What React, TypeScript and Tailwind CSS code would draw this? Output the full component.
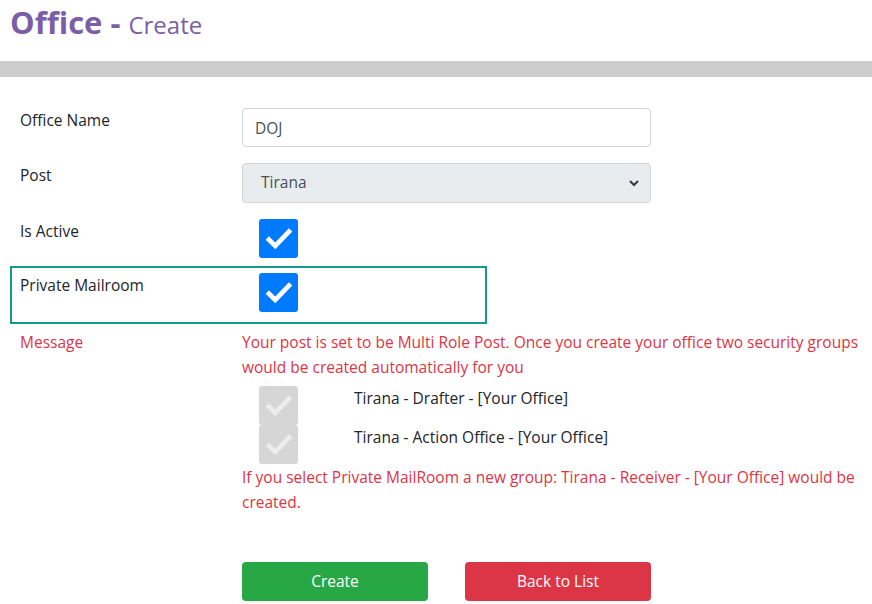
const font = { fontFamily: '"Open Sans", "Noto Sans", sans-serif' };

function CheckBox({ disabled = false }: { disabled?: boolean }) {
  return (
    <div
      className={
        "flex h-[39px] w-[39px] items-center justify-center rounded-[3px] " +
        (disabled ? "bg-[#d6d6d6]" : "bg-[#007bff]")
      }
    >
      <svg width="30" height="30" viewBox="0 0 24 24" fill="none">
        <path
          d="M4 12.5l5 5L20 6"
          stroke={disabled ? "#ececec" : "#ffffff"}
          strokeWidth="3.8"
          strokeLinecap="square"
        />
      </svg>
    </div>
  );
}

export default function App() {
  return (
    <div className="min-h-[604px] w-[872px] bg-white text-[15.5px] text-[#212529]" style={font}>
      <h1 className="flex items-baseline px-[10px] pt-[2px] text-[#7b5ea7]">
        <span className="text-[31px] font-bold leading-[40px]">Office -</span>
        <span className="ml-[8px] text-[24px] leading-[40px]">Create</span>
      </h1>

      <div className="mt-[16px] h-[16px] bg-[#cccccc]" />

      <div className="mt-[31px] grid grid-cols-[222px_1fr] pl-[20px] pr-[10px]">
        <label className="pt-[1px]">Office Name</label>
        <div>
          <input
            readOnly
            value="DOJ"
            className="h-[39px] w-[409px] rounded-[4px] border border-[#ced4da] px-[12px] text-[15.5px] text-[#495057] outline-none"
            style={font}
          />
        </div>

        <label className="mt-[16px] pt-[1px]">Post</label>
        <div className="mt-[16px]">
          <div className="flex h-[40px] w-[409px] items-center justify-between rounded-[4px] border border-[#ced4da] bg-[#e9ecef] pl-[18px] pr-[10px] text-[#495057]">
            <span>Tirana</span>
            <svg width="12" height="12" viewBox="0 0 12 12">
              <path d="M2 4l4 4 4-4" stroke="#343a40" strokeWidth="2" fill="none" />
            </svg>
          </div>
        </div>

        <label className="mt-[16px] pt-[1px]">Is Active</label>
        <div className="mt-[16px] pl-[17px]">
          <CheckBox />
        </div>
      </div>

      <div className="ml-[10px] mt-[8px] grid h-[58px] w-[477px] grid-cols-[222px_1fr] border-2 border-[#149a88] pl-[8px] pt-[5px]">
        <label className="pt-[1px]">Private Mailroom</label>
        <div className="pl-[17px]">
          <CheckBox />
        </div>
      </div>

      <div className="mt-[6px] grid grid-cols-[222px_1fr] pl-[20px] pr-[10px] text-[#dc3545]">
        <div className="leading-[25px]">Message</div>
        <div>
          <p className="leading-[25px]">
            Your post is set to be Multi Role Post. Once you create your office two security groups
            <br />
            would be created automatically for you
          </p>
          <div className="mt-[6px] flex flex-col pl-[17px] text-[#212529]">
            <div className="flex items-start">
              <CheckBox disabled />
              <span className="ml-[56px] mt-[1px]">Tirana - Drafter - [Your Office]</span>
            </div>
            <div className="flex items-start">
              <CheckBox disabled />
              <span className="ml-[56px] mt-[1px]">Tirana - Action Office - [Your Office]</span>
            </div>
          </div>
          <p className="mt-[1px] leading-[25px]">
            If you select Private MailRoom a new group: Tirana - Receiver - [Your Office] would be
            <br />
            created.
          </p>
        </div>
      </div>

      <div className="mt-[47px] flex pl-[242px]">
        <button className="h-[39px] w-[186px] rounded-[4px] bg-[#28a745] text-white">Create</button>
        <button className="ml-[37px] h-[39px] w-[186px] rounded-[4px] bg-[#dc3545] text-white">
          Back to List
        </button>
      </div>
    </div>
  );
}
